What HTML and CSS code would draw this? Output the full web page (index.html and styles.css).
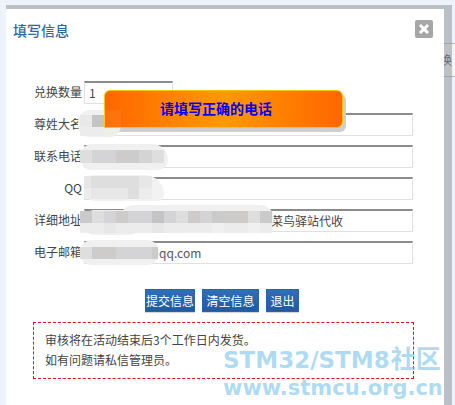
FILE: index.html
```html
<!DOCTYPE html>
<html lang="zh">
<head>
<meta charset="utf-8">
<title>填写信息</title>
<link rel="stylesheet" href="styles.css">
</head>
<body>
<div class="behind"><span>换</span></div>
<section class="modal">
  <header class="head">
    <h2 class="title">填写信息</h2>
    <button class="close" type="button" aria-label="关闭">
      <svg width="12" height="12" viewBox="0 0 12 12"><path d="M2 2L10 10M10 2L2 10" stroke="#fff" stroke-width="3"/></svg>
    </button>
  </header>
  <form class="form">
    <label class="lbl">兑换数量</label><div class="fld"><input class="inp short" value="1"></div>
    <label class="lbl">尊姓大名</label><div class="fld"><input class="inp"></div>
    <label class="lbl">联系电话</label><div class="fld"><input class="inp"></div>
    <label class="lbl">QQ</label><div class="fld"><input class="inp"></div>
    <label class="lbl">详细地址</label><div class="fld"><input class="inp addr" value="菜鸟驿站代收"></div>
    <label class="lbl">电子邮箱</label><div class="fld"><input class="inp mail" value="qq.com"></div>
  </form>
  <div class="actions">
    <button class="btn b1" type="button">提交信息</button>
    <button class="btn b2" type="button">清空信息</button>
    <button class="btn b3" type="button">退出</button>
  </div>
  <div class="note">
    <p>审核将在活动结束后3个工作日内发货。</p>
    <p>如有问题请私信管理员。</p>
  </div>
</section>

<div class="blob b-name"></div>
<div class="blob b-phone"></div>
<div class="blob b-qq"></div>
<div class="blob b-addr1"></div>
<div class="blob b-addr2"></div>
<div class="blob b-mail"></div>

<div class="px g-name"><i class="a"></i><i class="h"></i><i class="k"></i><i class="k"></i></div>
<div class="px g-phone"><i class="c"></i><i class="d"></i><i class="d"></i><i class="e"></i><i class="e"></i><i class="d"></i><i class="c"></i></div>
<div class="px g-qq"><i class="b"></i><i class="c"></i><i class="c"></i><i class="c"></i><i class="c"></i><i class="b"></i><i class="k"></i><i class="b"></i><i class="b"></i><i class="b"></i><i class="c"></i><i class="k"></i></div>
<div class="px g-addr"><i class="f"></i><i class="c"></i><i class="d"></i><i class="e"></i><i class="d"></i><i class="d"></i><i class="h"></i><i class="d"></i><i class="c"></i><i class="e"></i><i class="d"></i><i class="f"></i><i class="e"></i><i class="e"></i><i class="c"></i><i class="f"></i></div>
<div class="px g-addr2"><i class="k"></i><i class="k"></i><i class="b"></i><i class="k"></i><i class="k"></i><i class="k"></i><i class="b"></i><i class="k"></i><i class="k"></i><i class="k"></i><i class="k"></i><i class="l"></i><i class="k"></i><i class="k"></i><i class="l"></i><i class="k"></i></div>
<div class="px g-mail"><i class="c"></i><i class="e"></i><i class="e"></i><i class="d"></i><i class="d"></i><i class="d"></i><i class="m"></i></div>

<div class="toast">请填写正确的电话</div>
<div class="veil"></div>

<div class="mark">
  <div class="m1">STM32/STM8<span class="cjk">社区</span></div>
  <div class="m2">www.stmcu.org.cn</div>
</div>
</body>
</html>
```
FILE: styles.css
```css
* { box-sizing: border-box; }
html, body { margin: 0; height: 405px; overflow: hidden; }
body {
  position: relative;
  padding: 5px 0 0 6px;
  background: #eef3fb;
  font-family: "Noto Sans CJK SC", "Noto Sans", sans-serif;
  font-size: 12px;
  color: #444;
}
.behind {
  position: absolute; left: 444px; top: 43px; width: 11px; height: 34px;
  background: #f4f4f4;
  border-top: 1px solid #b4b4b4; border-bottom: 1px solid #b4b4b4;
  overflow: hidden; line-height: 32px; color: #222;
}
.behind span { margin-left: -4px; display: block; }
.modal {
  position: relative; z-index: 1;
  width: 446px; height: 400px;
  background: #fff; background-clip: padding-box;
  border-top: 4px solid #bcc1c6;
  border-right: 8px solid rgba(150,158,166,.6);
  padding: 0 0 0 7px;
}
.head { display: flex; justify-content: space-between; align-items: flex-start; height: 72px; padding: 11px 11px 0 0; }
.title { margin: 0; font-size: 14px; line-height: 20px; font-weight: 500; color: #30699f; }
.close {
  width: 18px; height: 18px; margin-top: 0; padding: 3px; border: 0; border-radius: 2px;
  background: #a6a6a6; display: flex; align-items: center; justify-content: center;
}
.form { display: grid; grid-template-columns: 64px 329px; row-gap: 9px; column-gap: 7px; align-items: center; width: 400px; }
.lbl { text-align: right; line-height: 21px; height: 23px; margin-right: -5px; }
.fld { height: 23px; display: flex; }
.inp {
  width: 329px; height: 23px; padding: 0 4px 2px; margin: 0;
  border: 1px solid #e0e0e0; border-top: 2px solid #8a8a8a;
  font: 12px "Noto Sans CJK SC", "Noto Sans", sans-serif; color: #444; background: #fff; outline: 0;
}
.short { width: 89px; }
.addr { padding-left: 186px; }
.mail { padding-left: 74px; color: #556; }
.actions { display: flex; margin: 25px 0 0 132px; height: 23px; }
.btn {
  height: 23px; padding: 0; border: 1px solid #2a64a8;
  background: linear-gradient(#2f6fb7, #22599f);
  color: #fff; font: 12px/20px "Noto Sans CJK SC", "Noto Sans", sans-serif;
  box-shadow: 0 1px 0 #d5d5d5;
}
.b1 { width: 50px; }
.b2 { width: 57px; margin-left: 7px; }
.b3 { width: 33px; margin-left: 7px; }
.note {
  width: 381px; height: 57px; margin: 10px 0 0 20px; padding: 7px 11px;
  border: 1px dashed #e00d1d;
}
.note p { margin: 0; line-height: 20px; }

.blob { position: absolute; z-index: 2; background: #f0f0f0; }
.b-name { left: 78px; top: 110px; width: 43px; height: 27px; border-radius: 12px; }
.b-phone { left: 82px; top: 144px; width: 86px; height: 26px; border-radius: 13px 22px 14px 12px; }
.b-qq { left: 84px; top: 175px; width: 80px; height: 26px; border-radius: 12px 24px 8px 14px; background: #f2f2f2; }
.b-addr1 { left: 82px; top: 210px; width: 60px; height: 25px; border-radius: 13px; }
.b-addr2 { left: 120px; top: 205px; width: 154px; height: 28px; border-radius: 14px; }
.b-mail { left: 80px; top: 240px; width: 79px; height: 25px; border-radius: 12px; }

.px { position: absolute; z-index: 3; display: grid; }
.px i { display: block; }
.g-name { left: 80px; top: 115px; grid-template-columns: 12px 12px; grid-template-rows: 12px 9px; }
.g-phone { left: 80px; top: 150px; grid-template-columns: 12px 12px 12px 12px 11px 13px 12px; height: 13px; }
.g-qq { left: 84px; top: 176px; grid-template-columns: 7px 13px 12px 12px 11px 13px; grid-template-rows: 12px 11px; }
.g-addr { left: 80px; top: 211px; grid-template-columns: repeat(16, 12px); height: 12px; }
.g-addr2 { left: 80px; top: 223px; grid-template-columns: repeat(16, 12px); height: 10px; }
.g-mail { left: 80px; top: 247px; grid-template-columns: 12px 12px 12px 12px 12px 12px 6px; height: 12px; }
.px .a { background: #e9e9e9; }
.px .b { background: #e7e7e7; }
.px .c { background: #dedede; }
.px .d { background: #d4d4d6; }
.px .e { background: #cdcccb; }
.px .f { background: #cacaca; }
.px .h { background: #c4c4c4; }
.px .k { background: #ececec; }
.px .l { background: #f0f0f0; }
.px .m { background: #cbcbcb; }

.toast {
  position: absolute; z-index: 4; left: 104px; top: 90px; width: 239px; height: 38px;
  border: 1px solid #ffc400; border-radius: 6px 6px 6px 0; padding-right: 15px;
  background: linear-gradient(90deg, #ff6600, #ff9900 50%, #ff6600);
  box-shadow: 3px 4px 0 #cfcfcf;
  color: #0000ff; font-size: 14px; font-weight: 700; line-height: 35px; text-align: center;
}
.veil {
  position: absolute; z-index: 5; left: 104px; top: 110px; width: 17px; height: 27px;
  border-radius: 0 0 12px 0;
  background: linear-gradient(rgba(255,255,255,.06) 18px, #f0efe6 18px);
}
.mark {
  position: absolute; z-index: 6; left: 223px; top: 345px; width: 232px;
  font-family: "DejaVu Sans", "Noto Sans CJK SC", sans-serif; font-weight: 700;
  color: rgba(120,196,234,.6); white-space: nowrap;
}
.m1 { font-size: 23px; line-height: 29px; }
.cjk { font-size: 25px; margin-left: 1px; }
.m2 { font-size: 21px; line-height: 26px; }
```
